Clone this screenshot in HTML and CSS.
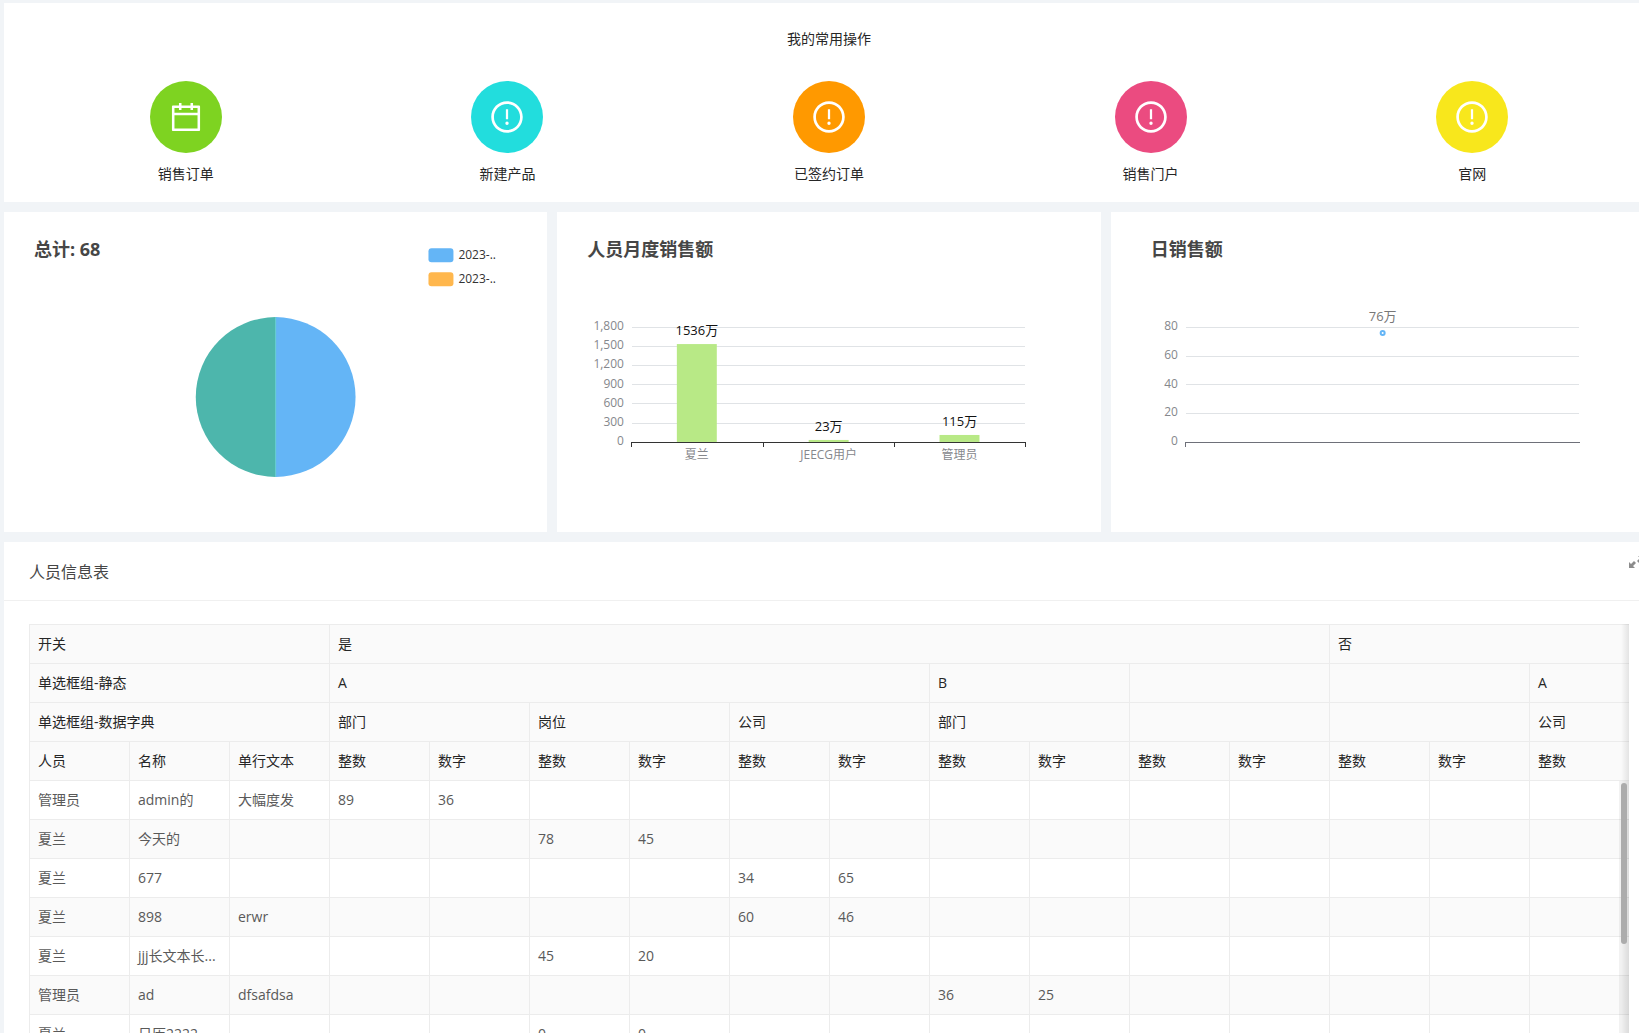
FILE: index.html
```html
<!DOCTYPE html>
<html lang="zh-CN">
<head>
<meta charset="utf-8">
<title>销售门户</title>
<link rel="stylesheet" href="styles.css">
</head>
<body>
<svg class="symbols" aria-hidden="true">
  <symbol id="icon-notice" viewBox="0 0 1024 1024">
    <path d="M512 64C264.600 64 64 264.600 64 512s200.600 448 448 448 448-200.600 448-448S759.400 64 512 64zm0 820c-205.400 0-372-166.600-372-372s166.600-372 372-372 372 166.600 372 372-166.600 372-372 372z"/>
    <path d="M464 688a48 48 0 1 0 96 0 48 48 0 1 0-96 0zm24-112h48c4.400 0 8-3.600 8-8V296c0-4.400-3.600-8-8-8h-48c-4.400 0-8 3.600-8 8v272c0 4.400 3.600 8 8 8z"/>
  </symbol>
</svg>
<main class="portal">
  <section class="card shortcuts">
    <h2 class="shortcuts-title">我的常用操作</h2>
    <nav class="shortcut-list">
      <a class="shortcut" href="#"><span class="disc green"><svg viewBox="0 0 1024 1024"><path d="M880 184H712v-64c0-4.400-3.600-8-8-8h-56c-4.400 0-8 3.600-8 8v64H384v-64c0-4.400-3.600-8-8-8h-56c-4.400 0-8 3.600-8 8v64H144c-17.700 0-32 14.300-32 32v664c0 17.700 14.300 32 32 32h736c17.700 0 32-14.300 32-32V216c0-17.700-14.300-32-32-32zm-40 656H184V460h656v380zM184 392V256h128v48c0 4.400 3.600 8 8 8h56c4.400 0 8-3.600 8-8v-48h256v48c0 4.400 3.600 8 8 8h56c4.400 0 8-3.600 8-8v-48h128v136H184z"/></svg></span>销售订单</a>
      <a class="shortcut" href="#"><span class="disc cyan"><svg><use href="#icon-notice"/></svg></span>新建产品</a>
      <a class="shortcut" href="#"><span class="disc orange"><svg><use href="#icon-notice"/></svg></span>已签约订单</a>
      <a class="shortcut" href="#"><span class="disc pink"><svg><use href="#icon-notice"/></svg></span>销售门户</a>
      <a class="shortcut" href="#"><span class="disc yellow"><svg><use href="#icon-notice"/></svg></span>官网</a>
    </nav>
  </section>

  <div class="charts">
    <section class="card chart-card">
      <h2 class="chart-title">总计: 68</h2>
      <svg class="chart" viewBox="0 0 544 260">
        <rect class="blue" x="425" y="-24" width="25" height="14" rx="3"/>
        <text class="legend" x="455" y="-13">2023-..</text>
        <rect class="amber" x="425" y="0" width="25" height="14" rx="3"/>
        <text class="legend" x="455" y="11">2023-..</text>
        <path class="blue" d="M272 45a80 80 0 0 1 0 160z"/>
        <path class="teal" d="M272 45a80 80 0 0 0 0 160z"/>
        <path class="seam" d="M272 45v160"/>
      </svg>
    </section>
    <section class="card chart-card">
      <h2 class="chart-title">人员月度销售额</h2>
      <svg class="chart" viewBox="0 0 544 260">
        <path class="grid" d="M75 55.500h394M75 74.500h394M75 93.500h394M75 112.500h394M75 131.500h394M75 151.500h394"/>
        <g class="axis-label end"><text x="67" y="58">1,800</text><text x="67" y="77">1,500</text><text x="67" y="96">1,200</text><text x="67" y="116">900</text><text x="67" y="135">600</text><text x="67" y="154">300</text><text x="67" y="173">0</text></g>
        <g class="lime"><rect x="120" y="72" width="40" height="98"/><rect x="252" y="168" width="40" height="2"/><rect x="383" y="163" width="40" height="7"/></g>
        <path class="axis" d="M75 175v-4.500h394v4.500M207 170v5M338 170v5"/>
        <g class="axis-label mid"><text x="140" y="187">夏兰</text><text x="272" y="187">JEECG用户</text><text x="403" y="187">管理员</text></g>
        <g class="value mid"><text x="140" y="63">1536万</text><text x="272" y="159">23万</text><text x="403" y="154">115万</text></g>
      </svg>
    </section>
    <section class="card chart-card">
      <h2 class="chart-title inset">日销售额</h2>
      <svg class="chart" viewBox="0 0 544 260">
        <path class="grid" d="M75 55.500h394M75 84.500h394M75 112.500h394M75 141.500h394"/>
        <g class="axis-label end"><text x="67" y="58">80</text><text x="67" y="87">60</text><text x="67" y="116">40</text><text x="67" y="144">20</text><text x="67" y="173">0</text></g>
        <path class="axis soft" d="M75 175v-4.500h395"/>
        <circle class="point" cx="272" cy="61" r="2"/>
        <text class="value soft mid" x="272" y="49">76万</text>
      </svg>
    </section>
  </div>

  <section class="card people">
    <header class="people-head">
      <h2 class="people-title">人员信息表</h2>
      <button class="expand" type="button" aria-label="全屏"><svg viewBox="0 0 16 16"><path d="M1 14V8l2 2 3-3 2 2-3 3 2 2zM16 2v6l-2-2-3 3-2-2 3-3-2-2z"/></svg></button>
    </header>
    <div class="table-wrap">
      <table class="pivot">
        <thead>
          <tr><th colspan="3">开关</th><th colspan="10">是</th><th colspan="3">否</th></tr>
          <tr><th colspan="3">单选框组-静态</th><th colspan="6">A</th><th colspan="2">B</th><th colspan="2"></th><th colspan="2"></th><th>A</th></tr>
          <tr><th colspan="3">单选框组-数据字典</th><th colspan="2">部门</th><th colspan="2">岗位</th><th colspan="2">公司</th><th colspan="2">部门</th><th colspan="2"></th><th colspan="2"></th><th>公司</th></tr>
          <tr><th>人员</th><th>名称</th><th>单行文本</th><th>整数</th><th>数字</th><th>整数</th><th>数字</th><th>整数</th><th>数字</th><th>整数</th><th>数字</th><th>整数</th><th>数字</th><th>整数</th><th>数字</th><th>整数</th></tr>
        </thead>
        <tbody>
          <tr><td>管理员</td><td>admin的</td><td>大幅度发</td><td>89</td><td>36</td><td></td><td></td><td></td><td></td><td></td><td></td><td></td><td></td><td></td><td></td><td></td></tr>
          <tr><td>夏兰</td><td>今天的</td><td></td><td></td><td></td><td>78</td><td>45</td><td></td><td></td><td></td><td></td><td></td><td></td><td></td><td></td><td></td></tr>
          <tr><td>夏兰</td><td>677</td><td></td><td></td><td></td><td></td><td></td><td>34</td><td>65</td><td></td><td></td><td></td><td></td><td></td><td></td><td></td></tr>
          <tr><td>夏兰</td><td>898</td><td>erwr</td><td></td><td></td><td></td><td></td><td>60</td><td>46</td><td></td><td></td><td></td><td></td><td></td><td></td><td></td></tr>
          <tr><td>夏兰</td><td>jjj长文本长...</td><td></td><td></td><td></td><td>45</td><td>20</td><td></td><td></td><td></td><td></td><td></td><td></td><td></td><td></td><td></td></tr>
          <tr><td>管理员</td><td>ad</td><td>dfsafdsa</td><td></td><td></td><td></td><td></td><td></td><td></td><td>36</td><td>25</td><td></td><td></td><td></td><td></td><td></td></tr>
          <tr><td>夏兰</td><td>日历2222</td><td></td><td></td><td></td><td>0</td><td>0</td><td></td><td></td><td></td><td></td><td></td><td></td><td></td><td></td><td></td></tr>
        </tbody>
      </table>
      <div class="edge-shadow"></div>
      <div class="scroll-track"><div class="scroll-thumb"></div></div>
    </div>
  </section>
</main>
</body>
</html>
```
FILE: styles.css
```css
* { box-sizing: border-box; }
body {
  margin: 0;
  height: 100vh;
  overflow: hidden;
  background: #f1f4f7;
  color: #262626;
  font: 14px/22px "Open Sans", "Noto Sans CJK SC", sans-serif;
}
h2 { margin: 0; font-weight: 400; }
.symbols { display: none; }
/* The portal canvas runs slightly past the right edge of the window. */
.portal {
  display: flex;
  flex-direction: column;
  gap: 10px;
  margin: 3px -15px 0 4px;
}
.card { background: #fff; }

.shortcuts { height: 199px; padding: 25px 21px 0; }
.shortcuts-title { font-size: 14px; line-height: 22px; text-align: center; }
.shortcut-list { display: grid; grid-template-columns: repeat(5, 1fr); margin-top: 31px; }
.shortcut {
  display: flex;
  flex-direction: column;
  align-items: center;
  gap: 10px;
  color: inherit;
  text-decoration: none;
}
.disc {
  display: flex;
  align-items: center;
  justify-content: center;
  width: 72px;
  height: 72px;
  border-radius: 50%;
}
.disc svg { width: 36px; height: 36px; fill: #fff; }
.green { background: #7ed321; }
.cyan { background: #22dddd; }
.orange { background: #ff9900; }
.pink { background: #eb4b80; }
.yellow { background: #f8e71c; }

.charts { display: grid; grid-template-columns: repeat(3, 1fr); gap: 10px; }
.chart-card { height: 320px; padding-top: 25px; }
.chart-title { padding-left: 30px; color: #464646; font-size: 18px; line-height: 24px; font-weight: 700; }
.chart-title.inset { padding-left: 40px; }
.chart { display: block; width: 100%; height: 260px; margin-top: 11px; overflow: visible; font-size: 12px; }
.blue { fill: #64b5f6; }
.amber { fill: #ffb74d; }
.teal { fill: #4db6ac; }
.lime { fill: #b8e986; }
.seam { stroke: #62ccd2; }
.legend { fill: #333; }
.grid { stroke: #e0e3e6; shape-rendering: crispEdges; }
.axis { fill: none; stroke: #333; shape-rendering: crispEdges; }
.axis.soft { stroke: #6e7079; }
.axis-label { fill: #85878c; }
.value { fill: #111; font-size: 13px; }
.value.soft { fill: #777; }
.point { fill: #fff; stroke: #64b5f6; stroke-width: 2px; }
.end { text-anchor: end; }
.mid { text-anchor: middle; }

.people-head {
  position: relative;
  display: flex;
  align-items: center;
  height: 59px;
  padding: 2px 25px 0;
  border-bottom: 1px solid #f0f0f0;
}
.people-title { color: #464646; font-size: 16px; line-height: 24px; }
.expand {
  position: absolute;
  top: 12px;
  right: 10px;
  width: 16px;
  height: 16px;
  padding: 0;
  border: 0;
  background: none;
}
.expand svg { display: block; width: 16px; height: 16px; fill: #8c8c8c; }
.table-wrap { position: relative; margin: 23px 25px 0; overflow: hidden; }
.pivot {
  width: calc(100% + 1px);
  table-layout: fixed;
  border-collapse: separate;
  border-spacing: 0;
  border-top: 1px solid #ececec;
  border-left: 1px solid #ececec;
}
.pivot th, .pivot td {
  height: 39px;
  padding: 0 8px;
  border-right: 1px solid #ececec;
  border-bottom: 1px solid #ececec;
  text-align: left;
  font-weight: 400;
  white-space: nowrap;
}
.pivot th { background: #fafafa; }
.pivot td { color: #595959; }
.pivot tbody tr:nth-child(even) { background: #fafafa; }
.edge-shadow {
  position: absolute;
  top: 0;
  right: 0;
  bottom: 0;
  width: 8px;
  background: linear-gradient(to right, rgba(0, 0, 0, 0), rgba(0, 0, 0, .09));
}
.scroll-track {
  position: absolute;
  top: 157px;
  right: 0;
  bottom: 0;
  width: 10px;
  padding: 2px;
  background: rgba(0, 0, 0, .05);
}
.scroll-thumb { width: 6px; height: 161px; border-radius: 3px; background: #acacac; }
```
